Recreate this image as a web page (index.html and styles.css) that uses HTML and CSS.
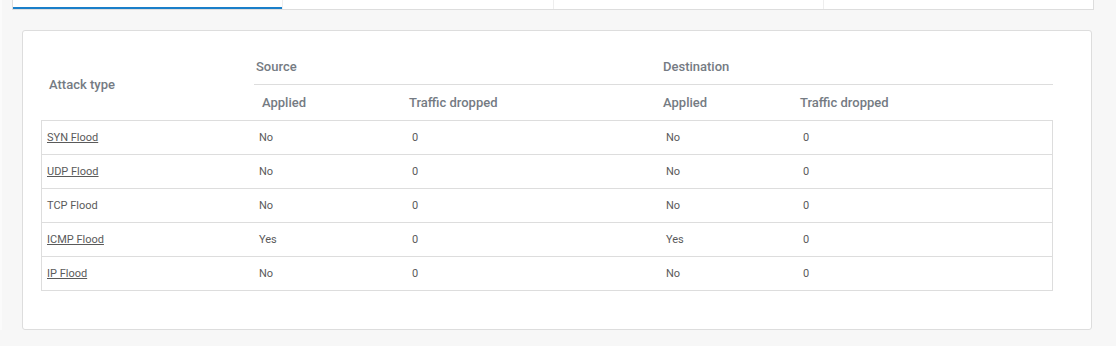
FILE: index.html
```html
<!DOCTYPE html>
<html lang="en">
<head>
    <meta charset="UTF-8">
    <meta name="viewport" content="width=device-width, initial-scale=1.0">
    <title>DoS &amp; spoof protection</title>
    <link rel="stylesheet" href="styles.css">
</head>
<body>

<div class="tabs">
    <div class="tab active"></div>
    <div class="tab"></div>
    <div class="tab"></div>
    <div class="tab"></div>
</div>

<div class="card">
    <table class="flood-table">
        <colgroup>
            <col class="col-type">
            <col class="col-applied">
            <col class="col-dropped">
            <col class="col-applied-dst">
            <col class="col-dropped-dst">
        </colgroup>
        <thead>
            <tr>
                <th rowspan="2" class="type-head">Attack type</th>
                <th colspan="2" class="group src">Source</th>
                <th colspan="2" class="group dst">Destination</th>
            </tr>
            <tr>
                <th class="sub src-applied">Applied</th>
                <th class="sub">Traffic dropped</th>
                <th class="sub">Applied</th>
                <th class="sub">Traffic dropped</th>
            </tr>
        </thead>
        <tbody>
            <tr>
                <td><a href="#">SYN Flood</a></td>
                <td>No</td>
                <td class="num">0</td>
                <td>No</td>
                <td class="num">0</td>
            </tr>
            <tr>
                <td><a href="#">UDP Flood</a></td>
                <td>No</td>
                <td class="num">0</td>
                <td>No</td>
                <td class="num">0</td>
            </tr>
            <tr>
                <td>TCP Flood</td>
                <td>No</td>
                <td class="num">0</td>
                <td>No</td>
                <td class="num">0</td>
            </tr>
            <tr>
                <td><a href="#">ICMP Flood</a></td>
                <td>Yes</td>
                <td class="num">0</td>
                <td>Yes</td>
                <td class="num">0</td>
            </tr>
            <tr>
                <td><a href="#">IP Flood</a></td>
                <td>No</td>
                <td class="num">0</td>
                <td>No</td>
                <td class="num">0</td>
            </tr>
        </tbody>
    </table>
</div>

</body>
</html>
```

FILE: styles.css
```css
body {
    font-family: Roboto, "Liberation Sans", Arial, sans-serif;
    background-color: #f7f7f7;
    border-left: 2px solid #fbfbfb;
    margin: 0;
    padding: 0;
    color: #5a5a5a;
}

/* tab strip, scrolled partly out of view */
.tabs {
    display: flex;
    margin-left: 10px;
    width: 1082px;
    box-sizing: border-box;
    background-color: white;
    border: 1px solid #ddd;
    border-top: none;
}

.tab {
    flex: 1;
    height: 9px;
    border-left: 1px solid #eee;
}

.tab:first-child {
    border-left: none;
}

.tab.active {
    box-shadow: inset 0 -2px 0 #1a7fc9;
}

.card {
    margin: 20px 0 0 20px;
    width: 1070px;
    box-sizing: border-box;
    background-color: white;
    border: 1px solid #ddd;
    border-radius: 3px;
    padding: 19px 38px 38px 18px;
}

.flood-table {
    width: 1012px;
    table-layout: fixed;
    border-collapse: separate;
    border-spacing: 0;
}

.col-type { width: 213px; }
.col-applied { width: 153px; }
.col-dropped { width: 254px; }
.col-applied-dst { width: 137px; }
.col-dropped-dst { width: 255px; }

th {
    font-size: 13px;
    font-weight: 500;
    color: #757b83;
    text-align: left;
    padding: 0 0 0 2px;
    white-space: nowrap;
}

th.type-head {
    padding-left: 8px;
    padding-bottom: 1px;
    vertical-align: middle;
}

th.group {
    line-height: 34px;
    border-bottom: 1px solid #ddd;
}

th.sub {
    line-height: 35px;
}

th.src-applied {
    padding-left: 8px;
}

td {
    font-size: 11px;
    line-height: 33px;
    padding: 0 0 0 5px;
    border-bottom: 1px solid #ddd;
    white-space: nowrap;
}

tbody tr:first-child td {
    border-top: 1px solid #ddd;
}

td:first-child {
    border-left: 1px solid #ddd;
}

td:last-child {
    border-right: 1px solid #ddd;
}

td a {
    color: #5a5a5a;
    text-decoration: underline;
}
```
